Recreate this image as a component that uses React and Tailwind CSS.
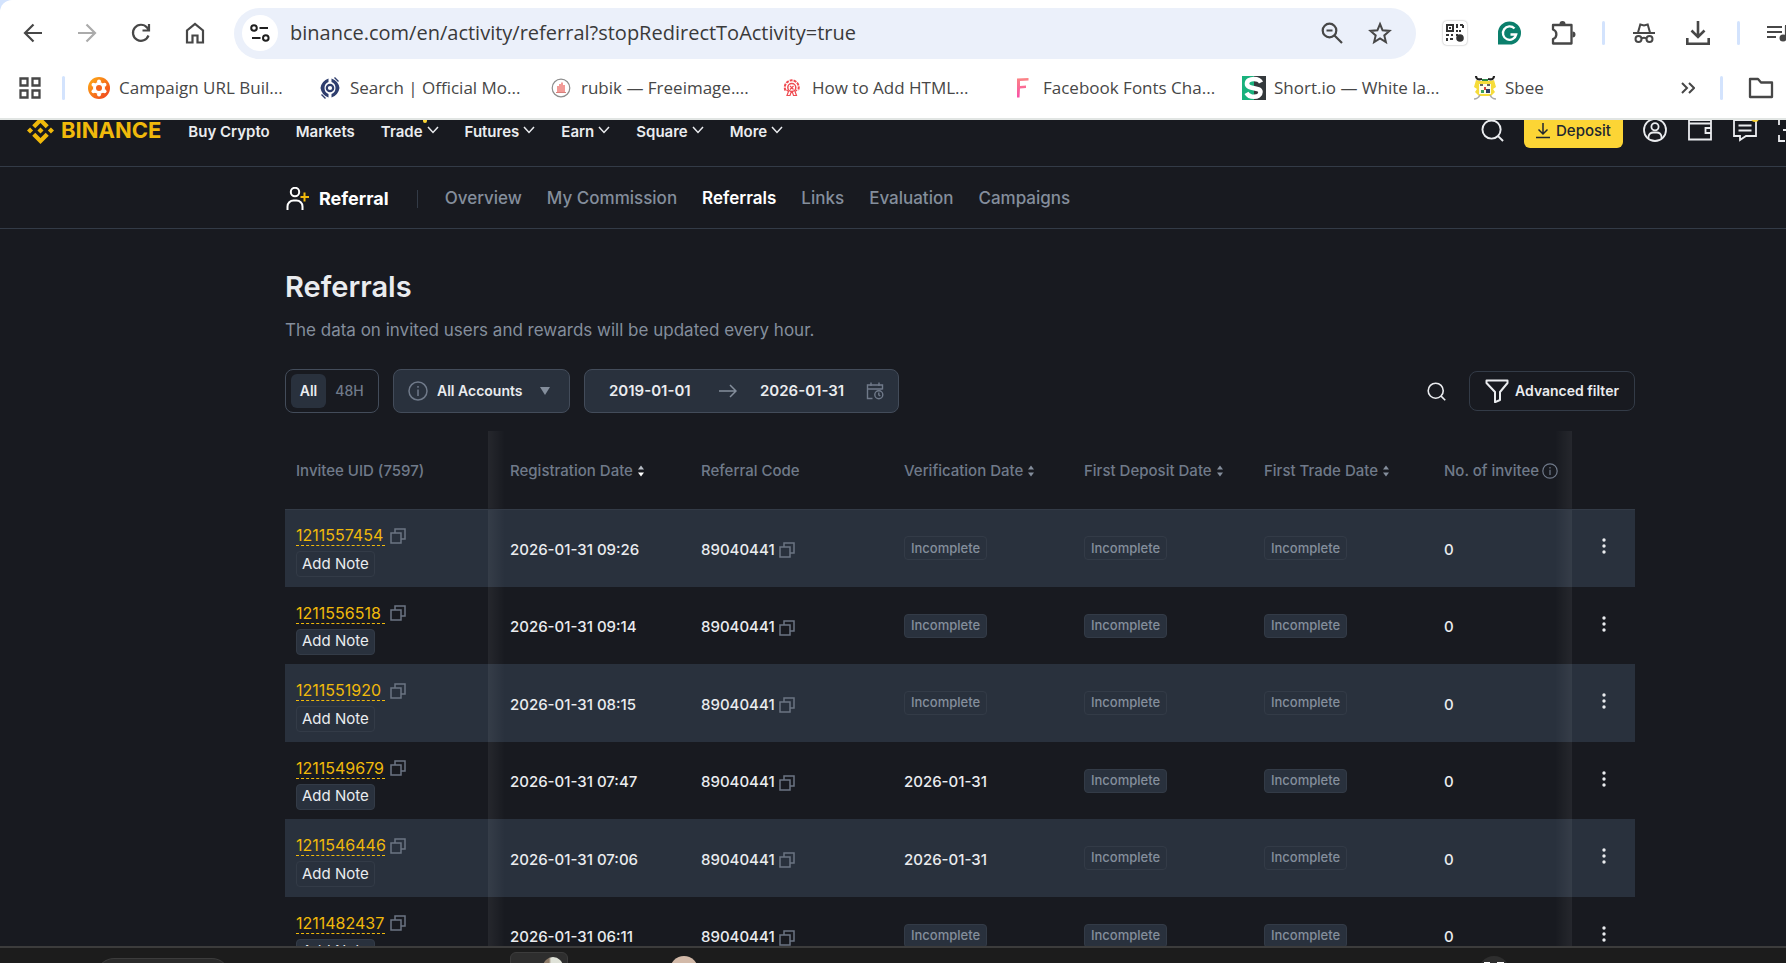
import React from "react";
import clsx from "clsx";
import { SiBinance } from "react-icons/si";

const bookmarks = [
  { label: "Campaign URL Buil...", Icon: CampaignIcon },
  { label: "Search | Official Mo...", Icon: OfficialIcon },
  { label: "rubik — Freeimage....", Icon: FreeimageIcon },
  { label: "How to Add HTML...", Icon: HtmlIcon },
  { label: "Facebook Fonts Cha...", Icon: FontsIcon },
  { label: "Short.io — White la...", Icon: ShortIcon },
  { label: "Sbee", Icon: SbeeIcon },
];

const menu = [
  { label: "Buy Crypto" },
  { label: "Markets" },
  { label: "Trade", arrow: true, badge: true },
  { label: "Futures", arrow: true },
  { label: "Earn", arrow: true },
  { label: "Square", arrow: true },
  { label: "More", arrow: true },
];

const tabs = ["Overview", "My Commission", "Referrals", "Links", "Evaluation", "Campaigns"];

const rows = [
  { uid: "1211557454", date: "2026-01-31 09:26", verified: null },
  { uid: "1211556518", date: "2026-01-31 09:14", verified: null },
  { uid: "1211551920", date: "2026-01-31 08:15", verified: null },
  { uid: "1211549679", date: "2026-01-31 07:47", verified: "2026-01-31" },
  { uid: "1211546446", date: "2026-01-31 07:06", verified: "2026-01-31" },
  { uid: "1211482437", date: "2026-01-31 06:11", verified: null },
];

/* ---------- bookmark favicons ---------- */

function CampaignIcon() {
  return (
    <svg viewBox="0 0 22 22" className="h-[22px] w-[22px]">
      <defs>
        <linearGradient id="campaign" x1="0" y1="0" x2="1" y2="1">
          <stop offset="0.2" stopColor="#fb9a17" />
          <stop offset="0.9" stopColor="#f1491f" />
        </linearGradient>
      </defs>
      <circle cx="11" cy="11" r="11" fill="url(#campaign)" />
      <g fill="#fff">
        <circle cx="11" cy="11" r="6" />
        <circle cx="11" cy="4.6" r="2" />
        <circle cx="16.5" cy="7.8" r="2" />
        <circle cx="16.5" cy="14.2" r="2" />
        <circle cx="11" cy="17.4" r="2" />
        <circle cx="5.5" cy="14.2" r="2" />
        <circle cx="5.5" cy="7.8" r="2" />
      </g>
      <circle cx="11" cy="11" r="3" fill="#f4641d" />
    </svg>
  );
}

function OfficialIcon() {
  return (
    <svg viewBox="0 0 22 22" className="h-[22px] w-[22px]" fill="none" stroke="#2f3e6e">
      <path d="M9.500 1.500A12 12 0 0 0 1.500 11a12 12 0 0 0 8 9.500V17a6.500 6.500 0 0 1 0-12z" fill="#2f3e6e" stroke="none" />
      <path d="M12.500 20.500a12 12 0 0 0 8-9.500 12 12 0 0 0-8-9.500V5a6.500 6.500 0 0 1 0 12z" fill="#2f3e6e" stroke="none" />
      <path d="M0 7.500L7 .5M15 21.500l7-7" stroke="#fff" strokeWidth="1.400" />
      <circle cx="11" cy="11" r="3.200" strokeWidth="2.200" />
      <path d="M2.500 17.500l4 4M15.500 .5l4 4" strokeWidth="1.400" />
    </svg>
  );
}

function FreeimageIcon() {
  return (
    <svg viewBox="0 0 22 22" className="h-[22px] w-[22px]">
      <circle cx="11" cy="11" r="8.8" fill="#fff" stroke="#8d8d8d" strokeWidth="1.2" />
      <path d="M7 15V9h2V7h2V5.500h2V8h2v7z" fill="#f29b97" />
      <path d="M6 15.500h10" stroke="#d9807c" />
    </svg>
  );
}

function HtmlIcon() {
  return (
    <svg viewBox="0 0 22 22" className="h-[22px] w-[22px]" fill="none" stroke="#ef4a50" strokeWidth="1.500">
      <path d="M4.500 13.500a7 7 0 1 1 12.500 0" strokeDasharray="3 1" strokeWidth="2" />
      <circle cx="10.800" cy="10.500" r="4" />
      <path d="M9 9l3.500 3.500M12.500 9L9 12.500M5.500 13l2 1.500-1.500 4h3l1-3h1.500l1 3h3l-1.500-4 2-1.500" strokeWidth="1.200" />
    </svg>
  );
}

function FontsIcon() {
  return (
    <svg viewBox="0 0 22 22" className="h-[22px] w-[22px]" fill="none">
      <defs>
        <linearGradient id="fonts" x1="0" y1="0" x2="0" y2="1">
          <stop offset="0" stopColor="#fb8585" />
          <stop offset="1" stopColor="#f94fa8" />
        </linearGradient>
      </defs>
      <path d="M5 1.500L16.500 1v2.500L8 4v5l6-.5v2.500L8 11.500 7.500 20.500H5z" fill="url(#fonts)" />
    </svg>
  );
}

function ShortIcon() {
  return (
    <svg viewBox="0 0 24 24" className="h-6 w-6 shrink-0">
      <path d="M0 0h12v24H0z" fill="#19b17c" />
      <path d="M12 0h12v24H12z" fill="#34393c" />
      <path
        d="M19 6.500C17.500 3.500 14.500 3 12 3 8 3 5 4.800 5 7.800c0 6 13.500 3 13.500 8.200 0 3-3 4.800-6.500 4.800-3.500 0-6-1.300-7.500-4"
        fill="none"
        stroke="#fff"
        strokeWidth="4.600"
      />
    </svg>
  );
}

function SbeeIcon() {
  return (
    <svg viewBox="0 0 24 24" className="h-6 w-6">
      <path d="M3 4l4 1h10l4-1 2 7-3 2 2 3-4 4H6l-4-4 2-3-3-2z" fill="#f6dc3a" />
      <path d="M6 8h12v10H6z" fill="#fdfbe8" />
      <path d="M3 0c0 3 2 4 6 3M21 0c0 3-2 4-6 3" fill="none" stroke="#222" strokeWidth="2.200" />
      <path d="M9 3h6v2H9z" fill="#2f8a4c" />
      <path d="M7 9h3M14 9h3" stroke="#333" strokeWidth="1.500" />
      <path d="M11 11h2v3h-2z" fill="#d2443d" />
      <path d="M13 13h4v4h-4z" fill="#2c3c63" />
      <path d="M8 14h3v3H8z" fill="#3d9f59" />
      <path d="M1 23c3 0 5-2 6-4M23 23c-3 0-5-2-6-4" fill="none" stroke="#a9a9a9" strokeWidth="1.500" />
    </svg>
  );
}

/* ---------- small shared icons ---------- */

const CopyIcon = () => (
  <svg viewBox="0 0 16 16" className="h-4 w-4" fill="none" stroke="#6b7482" strokeWidth="1.500">
    <path d="M1 5h10v10H1zM5 4.500V1h10v10h-3.500" />
  </svg>
);

const InfoIcon = ({ className }) => (
  <svg viewBox="0 0 20 20" className={className} fill="none" stroke="#707a8a" strokeWidth="1.500">
    <circle cx="10" cy="10" r="9" />
    <path d="M10 8.500V15M10 5v1.800" />
  </svg>
);

const SearchIcon = ({ className }) => (
  <svg viewBox="0 0 24 24" className={className} fill="none" stroke="#eaecef" strokeWidth="2">
    <circle cx="11" cy="11" r="9.500" />
    <path d="M17.800 17.800L23 23" />
  </svg>
);

const SortIcon = ({ active }) => (
  <svg viewBox="0 0 8 12" className="h-3 w-2">
    <path d="M1 4.500L4 .5l3 4z" fill={active ? "#b7bdc6" : "#848e9c"} />
    <path d="M1 7.500l3 4 3-4z" fill={active ? "#ffffff" : "#848e9c"} />
  </svg>
);

const Divider = ({ className }) => (
  <span className={clsx("h-6 w-[3px] shrink-0 rounded-full bg-[#d3e3fd]", className)} />
);

const ToolButton = ({ label, children }) => (
  <button aria-label={label} className="flex h-[51px] w-[54px] shrink-0 items-center justify-center">
    {children}
  </button>
);

/* ---------- browser ---------- */

const AddressRow = () => (
  <div className="flex h-[66px] items-center pl-[6px]">
    <ToolButton label="Back">
      <svg viewBox="0 0 20 20" className="h-5 w-5" fill="none" stroke="#474747" strokeWidth="2.200">
        <path d="M19 10H2.500M10.500 1.500L2 10l8.500 8.500" />
      </svg>
    </ToolButton>
    <ToolButton label="Forward">
      <svg viewBox="0 0 20 20" className="h-5 w-5" fill="none" stroke="#ababab" strokeWidth="2.200">
        <path d="M1 10h16.500M9.500 1.500L18 10l-8.500 8.500" />
      </svg>
    </ToolButton>
    <ToolButton label="Reload">
      <svg viewBox="0 0 20 20" className="h-5 w-5" fill="none" stroke="#474747" strokeWidth="2.200">
        <path d="M17.500 12.500A8 8 0 1 1 16 4.500L17.800 6.700M18 1v6.500h-6.500" />
      </svg>
    </ToolButton>
    <ToolButton label="Home">
      <svg viewBox="0 0 20 22" className="h-[22px] w-5" fill="none" stroke="#474747" strokeWidth="2.200">
        <path d="M2 20.500V8.500l8-6.500 8 6.500v12h-5.500v-7h-5v7z" />
      </svg>
    </ToolButton>

    <div className="mx-3 flex h-[51px] flex-1 items-center rounded-full bg-[#ebf0fa] pr-3 pl-2">
      <button aria-label="Site information" className="flex h-9 w-9 items-center justify-center rounded-full bg-white">
        <svg viewBox="0 0 20 18" className="h-[18px] w-5" fill="none" stroke="#1f1f1f" strokeWidth="2">
          <circle cx="4" cy="4" r="2.800" />
          <path d="M9.500 4H18M2 14h8.500" />
          <circle cx="15.800" cy="14" r="2.800" />
        </svg>
      </button>
      <input
        type="text"
        aria-label="Address"
        defaultValue="binance.com/en/activity/referral?stopRedirectToActivity=true"
        className="ml-3 min-w-0 flex-1 bg-transparent text-[20px] text-[#3a3a3a] outline-none"
      />
      <button aria-label="Zoom" className="flex h-9 w-12 items-center justify-center">
        <svg viewBox="0 0 22 22" className="h-[22px] w-[22px]" fill="none" stroke="#474747" strokeWidth="2.200">
          <circle cx="8.500" cy="8.500" r="6.800" />
          <path d="M13.500 13.500L21 21M5.500 8.500h6" />
        </svg>
      </button>
      <button aria-label="Bookmark this tab" className="flex h-9 w-12 items-center justify-center">
        <svg viewBox="0 0 24 24" className="h-6 w-6" fill="none" stroke="#474747" strokeWidth="2">
          <path d="M12 3l2.600 6.300 6.900.6-5.200 4.500 1.600 6.700-5.900-3.600-5.900 3.600 1.600-6.700-5.200-4.500 6.900-.6z" />
        </svg>
      </button>
    </div>

    <div className="-mr-5 flex shrink-0 items-center">
      <ToolButton label="QR code">
        <span className="flex h-6 w-6 items-center justify-center rounded-sm shadow-[0_0_2px_rgba(0,0,0,0.4)]">
          <svg viewBox="0 0 18 18" className="h-[18px] w-[18px]" fill="none" stroke="#333" strokeWidth="2">
            <path d="M1 1h6v6H1zM11 0v4M11 6v2M14 1h3M17 1v3M14 6v2M0 11h3M5 11h2M1 14v3M4 15h3M10 11h2" />
            <path d="M3 3h2v2H3z" fill="#333" stroke="none" />
            <circle cx="14" cy="14" r="2.800" fill="#333" />
          </svg>
        </span>
      </ToolButton>
      <ToolButton label="Grammarly">
        <svg viewBox="0 0 24 24" className="h-6 w-6" fill="none">
          <path d="M1 23.500V12a11.500 11.500 0 1 1 11.500 11.500z" fill="#0b7f6c" />
          <path d="M17.500 7.500a6.700 6.700 0 1 0 1.700 6H13.500" stroke="#fff" strokeWidth="2.300" />
        </svg>
      </ToolButton>
      <ToolButton label="Extensions">
        <svg viewBox="0 0 26 26" className="h-[26px] w-[26px]" fill="none" stroke="#474747" strokeWidth="2.300" strokeLinejoin="round">
          <path d="M3 5h18.500v18.500H3v-4.500c4.500-1.500 4.500-8 0-9.500z" />
          <path d="M9.500 4a3 3 0 0 1 6 0zM22.500 11.500a3 3 0 0 1 0 6z" fill="#474747" stroke="none" />
        </svg>
      </ToolButton>
      <Divider className="mx-3" />
      <ToolButton label="Incognito">
        <svg viewBox="0 0 22 20" className="h-5 w-[22px]" fill="none" stroke="#474747" strokeWidth="2">
          <path d="M0 10h22" />
          <path d="M5 9.500L7.300 1.500 11 2.500l3.700-1L17 9.500" />
          <circle cx="5.500" cy="16" r="3" />
          <circle cx="16.500" cy="16" r="3" />
          <path d="M8.500 15.500c1.500-1 3.500-1 5 0" />
        </svg>
      </ToolButton>
      <ToolButton label="Downloads">
        <svg viewBox="0 0 24 24" className="h-6 w-6" fill="none" stroke="#474747" strokeWidth="2.600">
          <path d="M12 0v15M5.500 9.500L12 16l6.500-6.500M1.300 17v5.700h21.400V17" />
        </svg>
      </ToolButton>
      <Divider className="mx-3" />
      <ToolButton label="Media">
        <svg viewBox="0 0 24 20" className="h-5 w-6" fill="none" stroke="#474747" strokeWidth="2.200">
          <path d="M0 4h15M0 9h15M0 14h9M19 3v12M18 3h6" />
          <circle cx="16" cy="15" r="3.500" fill="#474747" stroke="none" />
        </svg>
      </ToolButton>
    </div>
  </div>
);

const BookmarkRow = () => (
  <div className="flex h-[52px] items-center pr-3 pb-2 pl-[18px] text-[17px] text-[#474747]">
    <button aria-label="Apps" className="shrink-0">
      <svg viewBox="0 0 24 24" className="h-6 w-6" fill="none" stroke="#474747" strokeWidth="2.300">
        <path d="M2.500 2.500h7v7h-7zM14.500 2.500h7v7h-7zM2.500 14.500h7v7h-7zM14.500 14.500h7v7h-7z" />
      </svg>
    </button>
    <Divider className="mr-[22px] ml-5" />
    <div className="flex min-w-0 flex-1">
      {bookmarks.map(({ label, Icon }) => (
        <a key={label} href="#" className="flex w-[231px] shrink-0 items-center gap-2 whitespace-nowrap last:w-auto">
          <span className="flex w-6 justify-center">
            <Icon />
          </span>
          {label}
        </a>
      ))}
    </div>
    <div className="flex shrink-0 items-center">
      <button aria-label="More bookmarks">
        <svg viewBox="0 0 14 12" className="h-3 w-[14px]" fill="none" stroke="#474747" strokeWidth="2">
          <path d="M1 1l5 5-5 5M8 1l5 5-5 5" />
        </svg>
      </button>
      <Divider className="mx-[25px]" />
      <button aria-label="All bookmarks">
        <svg viewBox="0 0 26 22" className="h-[22px] w-[26px]" fill="none" stroke="#474747" strokeWidth="2.300" strokeLinejoin="round">
          <path d="M2 2h8l3 3.500h11V20H2z" />
        </svg>
      </button>
    </div>
  </div>
);

/* ---------- site ---------- */

const SiteHeader = () => (
  <header className="-mt-[26px] flex h-[73px] items-center border-b border-[#333b47] pl-[27px] text-[15px] font-semibold">
    <a href="#" className="flex items-center gap-[7px] text-[#f0b90b]">
      <SiBinance className="h-[27px] w-[27px]" />
      <span className="text-[22px] leading-6 font-bold">BINANCE</span>
    </a>
    <nav className="ml-[27px] flex gap-[26px] pt-1">
      {menu.map((item) => (
        <a key={item.label} href="#" className="relative flex items-center gap-1">
          {item.label}
          {item.arrow && (
            <svg viewBox="0 0 12 8" className="h-2 w-3 -translate-y-0.5" fill="none" stroke="#eaecef" strokeWidth="1.500">
              <path d="M1 1l5 5.500L11 1" />
            </svg>
          )}
          {item.badge && <span className="absolute -top-1 right-3 h-1.5 w-1 rounded-b-full bg-[#fcd535]" />}
        </a>
      ))}
    </nav>
    <div className="-mr-4 ml-auto flex shrink-0 items-center">
      <button aria-label="Search" className="mr-5">
        <SearchIcon className="h-[23px] w-[23px]" />
      </button>
      <button className="mr-5 flex h-9 w-[99px] items-center justify-center gap-1.5 rounded-md bg-[#fcd535] pt-0.5 font-medium text-[#202630]">
        <svg viewBox="0 0 14 16" className="h-4 w-[14px]" fill="none" stroke="#202630" strokeWidth="1.500">
          <path d="M7 0v11M2.500 6.500L7 11l4.500-4.500M0 14.500h14" />
        </svg>
        Deposit
      </button>
      <button aria-label="Account" className="mr-[21px]">
        <svg viewBox="0 0 24 24" className="h-6 w-6" fill="none" stroke="#eaecef" strokeWidth="1.800">
          <circle cx="12" cy="12" r="11" />
          <circle cx="12" cy="8.800" r="3.600" />
          <path d="M5.500 20v-1.500a5 5 0 0 1 5-4h3a5 5 0 0 1 5 4V20" />
        </svg>
      </button>
      <button aria-label="Wallet" className="mr-[21px]">
        <svg viewBox="0 0 24 24" className="h-6 w-6" fill="none" stroke="#eaecef" strokeWidth="1.800">
          <path d="M1 21.500V2h22v19.500zM1 5.500h22M23 10h-5.500v5H23" />
        </svg>
      </button>
      <button aria-label="Messages" className="relative mr-[21px]">
        <svg viewBox="0 0 24 24" className="h-6 w-6" fill="none" stroke="#eaecef" strokeWidth="1.800">
          <path d="M1 2h22v16H13l-6 4v-4H1zM5.500 7.500h13M5.500 12.500h13" />
        </svg>
        <span className="absolute -top-1 -right-0.5 h-2 w-2 rounded-full bg-[#fcd535]" />
      </button>
      <button aria-label="Scan">
        <svg viewBox="0 0 24 24" className="h-6 w-6" fill="none" stroke="#eaecef" strokeWidth="1.800">
          <path d="M7 1H1v6M1 17v6h6M17 1h6v6M23 17v6h-6M5 12h14" />
        </svg>
      </button>
    </div>
  </header>
);

const SubNav = () => (
  <nav className="flex h-[62px] items-center border-b border-[#333b47] pt-0.5 pl-[286px] text-[#848e9c]">
    <svg viewBox="0 0 24 24" className="h-6 w-6" fill="none" stroke="#fff" strokeWidth="2">
      <circle cx="9" cy="5" r="4.200" />
      <path d="M1.500 23v-3.500a6 6 0 0 1 6-6h3a6 6 0 0 1 6 6V23" />
      <path d="M18.500 5.500v9M14.500 10H23" stroke="#f0b90b" />
    </svg>
    <span className="ml-[9px] text-[18px] font-bold text-white">Referral</span>
    <span className="mr-[27px] ml-7 h-[18px] w-px bg-[#333b47]" />
    <div className="flex gap-[25px] pt-px text-[17px] font-medium">
      {tabs.map((tab) => (
        <a key={tab} href="#" className={clsx(tab === "Referrals" && "font-semibold text-white")}>
          {tab}
        </a>
      ))}
    </div>
  </nav>
);

const Filters = () => (
  <div className="mt-[27px] flex h-11 items-center text-sm font-semibold">
    <div className="flex h-11 items-center rounded-lg border border-[#434c5a] p-[5px]">
      <button className="h-[34px] w-[35px] rounded-md bg-[#29313d]">All</button>
      <button className="h-[34px] w-[47px] font-medium text-[#707a8a]">48H</button>
    </div>
    <div className="relative ml-[14px]">
      <InfoIcon className="pointer-events-none absolute top-3 left-[15px] h-5 w-5" />
      <select
        aria-label="Accounts"
        className="h-11 w-[177px] appearance-none rounded-lg border border-[#434c5a] bg-[#29313d] pl-[43px]"
      >
        <option>All Accounts</option>
      </select>
      <svg viewBox="0 0 10 8" className="pointer-events-none absolute top-[18px] right-5 h-2 w-[10px]">
        <path d="M0 0h10L5 8z" fill="#848e9c" />
      </svg>
    </div>
    <div className="ml-[14px] flex h-11 items-center rounded-lg border border-[#434c5a] bg-[#29313d] pr-[14px] pl-6 text-[15px]">
      <input aria-label="Start date" defaultValue="2019-01-01" className="w-[94px] bg-transparent outline-none" />
      <svg viewBox="0 0 18 14" className="mx-4 h-[14px] w-[18px]" fill="none" stroke="#848e9c" strokeWidth="1.500">
        <path d="M0 7h17M11 1l6 6-6 6" />
      </svg>
      <input aria-label="End date" defaultValue="2026-01-31" className="ml-[7px] w-[90px] bg-transparent outline-none" />
      <svg viewBox="0 0 18 18" className="ml-4 h-[18px] w-[18px]" fill="none" stroke="#707a8a" strokeWidth="1.400">
        <path d="M6.500 16.500h-5V3h15v4.500M1.500 7h15M5 .5V4M13 .5V4" />
        <circle cx="12.800" cy="12.800" r="4" />
        <path d="M12.800 10.500V13l1.500 1" />
      </svg>
    </div>
    <button aria-label="Search invitee" className="ml-auto">
      <SearchIcon className="h-[19px] w-[19px]" />
    </button>
    <button className="ml-[23px] flex h-10 items-center gap-[6px] rounded-lg border border-[#333b47] px-[15px]">
      <svg viewBox="0 0 24 24" className="h-6 w-6" fill="none" stroke="#eaecef" strokeWidth="2" strokeLinejoin="round">
        <path d="M1.500 1.500h21v2.500L15 13v8l-5 2.200V13L1.500 4z" />
      </svg>
      Advanced filter
    </button>
  </div>
);

const StatusCell = ({ value }) => (
  <td className={clsx("pl-[11px]", value && "pt-1")}>
    {value ? (
      value
    ) : (
      <span className="flex h-6 w-fit items-center rounded-sm border border-[#333b47] bg-[#29313d] px-[6px] text-[13px] font-medium text-[#848e9c]">
        Incomplete
      </span>
    )}
  </td>
);

const SortHead = ({ label, active, className = "pl-[11px]" }) => (
  <th className={clsx("pt-0.5 font-medium", className)}>
    <button className="flex items-center gap-1 whitespace-nowrap">
      {label}
      <SortIcon active={active} />
    </button>
  </th>
);

const shadowLeft = "bg-[linear-gradient(to_right,rgba(255,255,255,0.06),transparent)] bg-[length:17px_100%] bg-left bg-no-repeat";
const shadowRight = "bg-[linear-gradient(to_left,rgba(255,255,255,0.06),transparent)] bg-[length:17px_100%] bg-right bg-no-repeat";

const ReferralTable = () => (
  <table className="mt-[18px] w-full table-fixed border-collapse text-left text-[15px]">
    <colgroup>
      <col className="w-[203px]" />
      <col className="w-[202px]" />
      <col className="w-[203px]" />
      <col className="w-[180px]" />
      <col className="w-[180px]" />
      <col className="w-[180px]" />
      <col />
      <col className="w-[63px]" />
    </colgroup>
    <thead>
      <tr className="h-[78px] border-b border-[#333b47] text-[#707a8a]">
        <th className="pt-0.5 pl-[11px] font-medium">Invitee UID (7597)</th>
        <SortHead label="Registration Date" active className={clsx("pl-[22px]", shadowLeft)} />
        <th className="pt-0.5 pl-[11px] font-medium">Referral Code</th>
        <SortHead label="Verification Date" />
        <SortHead label="First Deposit Date" />
        <SortHead label="First Trade Date" />
        <th className={clsx("pt-0.5 pl-[11px] font-medium", shadowRight)}>
          <span className="flex items-center gap-[3px] whitespace-nowrap">
            No. of invitee
            <InfoIcon className="h-4 w-4" />
          </span>
        </th>
        <th aria-label="Actions" />
      </tr>
    </thead>
    <tbody>
      {rows.map((row) => (
        <tr key={row.uid} className="h-[77px] font-medium odd:h-[78px] odd:bg-[#29313d]">
          <td className="pt-1.5 pl-[11px] font-normal">
            <div className="flex items-center gap-[5px]">
              <a href="#" className="w-[89px] border-b border-dashed border-[#f0b90b] text-[16px] leading-5 text-[#f0b90b]">
                {row.uid}
              </a>
              <button aria-label={"Copy " + row.uid}>
                <CopyIcon />
              </button>
            </div>
            <button className="mt-[5px] flex h-[26px] items-center rounded-sm border border-[#333b47] bg-[#29313d] px-[5px]">
              Add Note
            </button>
          </td>
          <td className={clsx("pt-1 pl-[22px]", shadowLeft)}>{row.date}</td>
          <td className="pt-1 pl-[11px]">
            <span className="flex items-center gap-1">
              89040441
              <button aria-label="Copy referral code">
                <CopyIcon />
              </button>
            </span>
          </td>
          <StatusCell value={row.verified} />
          <StatusCell />
          <StatusCell />
          <td className={clsx("pt-1 pl-[11px]", shadowRight)}>0</td>
          <td className="pb-1">
            <button aria-label="More actions" className="mx-auto flex">
              <svg viewBox="0 0 4 16" className="h-4 w-1" fill="#eaecef">
                <circle cx="2" cy="2" r="1.700" />
                <circle cx="2" cy="8" r="1.700" />
                <circle cx="2" cy="14" r="1.700" />
              </svg>
            </button>
          </td>
        </tr>
      ))}
    </tbody>
  </table>
);

const Taskbar = () => (
  <footer className="flex h-[17px] shrink-0 items-start overflow-hidden border-t-2 border-[#3c3c3c] bg-[#1c1c1c]">
    <span className="mt-2.5 ml-[96px] h-9 w-[134px] rounded-full border border-[#3c3c3c] bg-[#2b2b2b]" />
    <span className="mt-1 ml-[280px] flex h-9 w-[58px] justify-end rounded-md border border-[#3c3c3c] bg-[#2e2e2e] pt-1 pr-1">
      <span className="h-5 w-5 rounded-full bg-linear-to-r from-[#8d7b68] from-30% to-[#dfe2d8] to-40%" />
    </span>
    <span className="mt-2 ml-[102px] h-7 w-7 rounded-full bg-[#d2b9a8]" />
    <span className="mt-2 mr-[276px] ml-auto h-8 w-8 rounded-full bg-[#2e2e2e] pt-1.5">
      <svg viewBox="0 0 20 4" className="mx-auto h-1 w-5" stroke="#fff" strokeWidth="2">
        <path d="M0 1h6M2 1v3M9 1v3M13 1h7M17 1v3" />
      </svg>
    </span>
  </footer>
);

export default function App() {
  return (
    <div className="flex h-screen flex-col overflow-hidden bg-[#181a20]">
      <div className="shrink-0 bg-[#d3e3fd]">
        <div className="overflow-hidden rounded-tl-xl border-b-2 border-[#e1e5e3] bg-white font-['Open_Sans','Noto_Sans',sans-serif]">
          <AddressRow />
          <BookmarkRow />
        </div>
      </div>
      <div className="min-h-0 flex-1 overflow-hidden font-['Inter','Liberation_Sans',sans-serif] text-[#eaecef]">
        <SiteHeader />
        <SubNav />
        <main className="pt-[38px] pr-[151px] pl-[285px]">
          <h1 className="text-[29px] leading-10 font-semibold">Referrals</h1>
          <p className="mt-[11px] text-[17px] leading-6 text-[#848e9c]">
            The data on invited users and rewards will be updated every hour.
          </p>
          <Filters />
          <ReferralTable />
        </main>
      </div>
      <Taskbar />
    </div>
  );
}
